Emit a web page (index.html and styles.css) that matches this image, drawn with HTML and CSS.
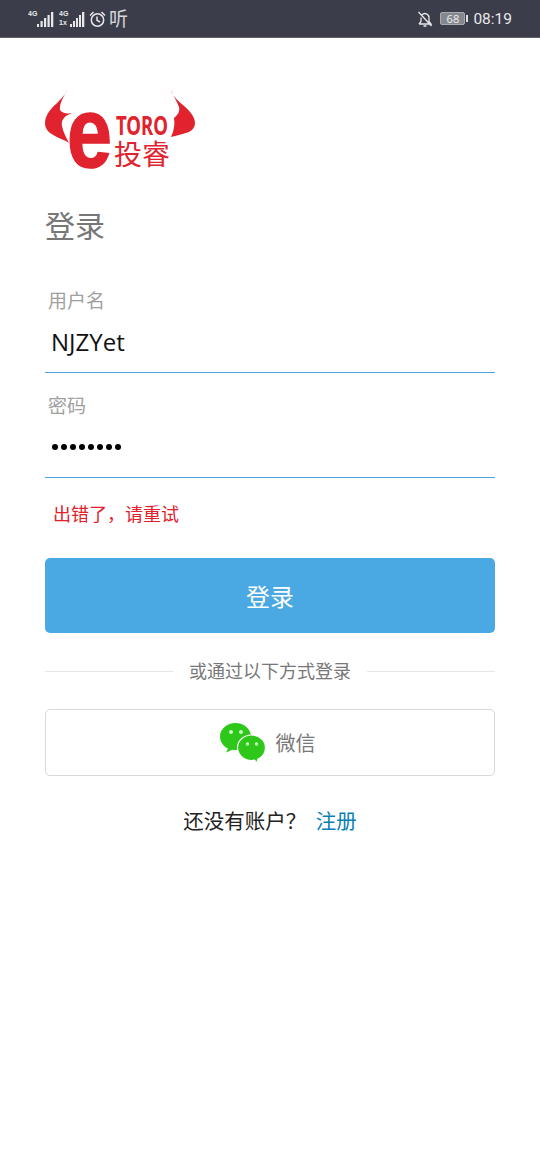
FILE: index.html
```html
<!DOCTYPE html>
<html lang="en">
<head>
  <meta charset="UTF-8">
  <title>登录</title>
  <link rel="stylesheet" href="styles.css">
</head>
<body>

  <!-- Status bar -->
  <div class="status-bar">
    <div class="status-left">
      <svg width="26" height="18" viewBox="0 0 26 18">
        <text x="0" y="6" class="tiny">4G</text>
        <path d="M9 14h2v3H9zM12.500 11h2.200v6h-2.200zM16 8h2.200v9H16zM19.500 5h2.200v12h-2.200zM23 2h2.300v15H23z" fill="#e8e8ea"/>
      </svg>
      <svg width="26" height="18" viewBox="0 0 26 18">
        <text x="0" y="6" class="tiny">4G</text>
        <text x="0" y="15" class="tiny">1x</text>
        <path d="M11 14h2v3h-2zM14 11h2v6h-2zM17 8h2v9h-2zM20 5h2v12h-2zM23 2h2.300v15H23z" fill="#e8e8ea"/>
      </svg>
      <svg width="17" height="18" viewBox="0 0 17 18" fill="none" stroke="#e8e8ea" stroke-width="1.500">
        <circle cx="8.500" cy="10" r="6.200"/>
        <path d="M8 6.500v3.800l3 1.700M1 5.500l3.500-3.500M16 5.500l-3.500-3.500"/>
      </svg>
      <span class="app-name">听</span>
    </div>
    <div class="status-right">
      <svg width="16" height="18" viewBox="0 0 16 18" fill="none" stroke="#e8e8ea" stroke-width="1.300">
        <path d="M2 14h12l-2-2.500V7.500a4 4 0 0 0-7-2.600M4 7.500v4L2 14M6.500 16h3M1.500 2l13 14"/>
      </svg>
      <div class="battery"><span class="battery-level">68</span></div>
      <span class="battery-tip"></span>
      <span class="clock">08:19</span>
    </div>
  </div>

  <!-- Login form -->
  <div class="page">
    <svg class="logo" width="150" height="80" viewBox="0 0 150 80">
      <path d="M22 0C21 4 16 9 11 14C4 20 0 27 0 33C0 39 4 43 10 46C15 49 20 50 24 53C21 47 18 42 17 36C16 30 19 26 27 23C21 24 17 23 15 20C14 13 19 7 22 0Z" fill="#e0232e"/>
      <path d="M126 0C127 5 132 10 138 15C145 21 150 27 150 33C150 37 148 40 144 42C139 44 133 45 126 47C129 41 130 34 129 28C133 25 135 21 134 17C132 11 128 6 126 0Z" fill="#e0232e"/>
      <text x="22" y="77" class="logo-e" textLength="45" lengthAdjust="spacingAndGlyphs">e</text>
      <text x="71" y="45" class="logo-toro" textLength="52" lengthAdjust="spacingAndGlyphs">TORO</text>
      <text x="69" y="75" class="logo-cn">投睿</text>
    </svg>

    <h2 class="title">登录</h2>

    <div class="field field-user">
      <label class="field-label">用户名</label>
      <div class="field-value">NJZYet</div>
    </div>
    <div class="field field-pass">
      <label class="field-label">密码</label>
      <div class="field-dots">
        <i></i><i></i><i></i><i></i><i></i><i></i><i></i><i></i>
      </div>
    </div>

    <div class="error">出错了，请重试</div>

    <button class="button login-button">登录</button>

    <div class="divider"><span>或通过以下方式登录</span></div>

    <button class="button wechat-button">
      <svg width="46" height="41" viewBox="0 0 46 41">
        <path d="M15.500 1C7 1 0 7 0 14.500C0 20 3.500 24.500 8 26.500L6 30.500L12.500 27.800C13.500 28 14.500 28 15.500 28C24 28 31 22 31 14.500C31 7 24 1 15.500 1Z" fill="#2ec81a"/>
        <path d="M31.500 13C23.500 13 17.500 18.800 17.500 25.500C17.500 32.500 23.500 38.500 31.500 38.500C32.500 38.500 33.500 38.400 34.500 38.200L37 41L38 37C42.500 35 45.500 30.500 45.500 25.500C45.500 18.800 39.500 13 31.500 13Z" fill="#2ec81a" stroke="#fff" stroke-width="1.200"/>
        <circle cx="11" cy="10" r="2" fill="#c9f5c0"/>
        <circle cx="21" cy="10" r="2" fill="#c9f5c0"/>
        <circle cx="27.500" cy="22" r="1.700" fill="#c9f5c0"/>
        <circle cx="36.500" cy="22" r="1.700" fill="#c9f5c0"/>
      </svg>
      <span>微信</span>
    </button>

    <div class="register">还没有账户？ <a class="register-link">注册</a></div>
  </div>

</body>
</html>
```

FILE: styles.css
```css
body { margin: 0; background: #fff; font-family: "Open Sans", "Noto Sans CJK SC", sans-serif; }
.status-bar { height: 38px; box-sizing: border-box; background: #3b3e4a; border-bottom: 1px solid #5c6068; display: flex; justify-content: space-between; align-items: center; padding: 0 28px; color: #e8e8ea; }
.status-left { display: flex; align-items: center; gap: 4px; }
.status-left svg:first-child { margin-right: 1px; }
.status-right { display: flex; align-items: center; }
.tiny { font-family: "Liberation Sans", sans-serif; font-size: 7px; font-weight: bold; fill: #e8e8ea; }
.app-name { font-size: 19px; line-height: 18px; margin-left: -1px; color: #d6d6da; }
.battery { width: 25px; height: 13px; box-sizing: border-box; margin-left: 7px; border: 1px solid #a9abb0; border-radius: 2px; background: #85878e; display: flex; justify-content: center; align-items: center; }
.battery-level { font-size: 11px; line-height: 11px; color: #f0f0f0; }
.battery-tip { width: 2px; height: 7px; margin: 0 5px 0 1px; background: #ddd; }
.clock { font-family: Roboto, sans-serif; font-size: 15.5px; }

.page { padding: 52px 45px 0; }
.logo { display: block; }
.logo-e { font-family: "Liberation Sans", sans-serif; font-size: 100px; font-weight: bold; fill: #e0232e; stroke: #e0232e; stroke-width: 1.5px; }
.logo-toro { font-family: "Noto Sans", sans-serif; font-size: 26px; font-weight: bold; fill: #e0232e; }
.logo-cn { font-family: "Noto Sans CJK SC", sans-serif; font-size: 28px; fill: #e0232e; }

.title { margin: 36px 0 0; font-size: 30px; line-height: 40px; font-weight: 400; color: #777; }

.field { box-sizing: border-box; border-bottom: 1px solid #4aa3df; padding: 0 3px; }
.field-user { height: 127px; padding-top: 42px; }
.field-pass { height: 105px; padding-top: 20px; }
.field-label { display: block; font-size: 19px; line-height: 26px; color: #a0a0a0; }
.field-value { font-size: 24px; line-height: 32px; color: #111; padding: 12px 3px 0; }
.field-dots { display: flex; gap: 3px; padding: 25px 4px 0; }
.field-dots i { width: 6px; height: 6px; border-radius: 50%; background: #000; }

.error { margin-top: 22px; padding-left: 8px; font-size: 18px; line-height: 28px; color: #e0202a; }

.button { display: flex; justify-content: center; align-items: center; width: 100%; border-radius: 5px; font-family: inherit; cursor: pointer; }
.login-button { height: 75px; margin-top: 30px; border: none; background: #4aa8e2; color: #fff; font-size: 24px; }

.divider { display: flex; align-items: center; gap: 16px; margin-top: 26px; font-size: 18px; line-height: 24px; color: #777; }
.divider::before, .divider::after { content: ""; flex: 1; height: 1px; background: #e6e6e6; }

.wechat-button { height: 67px; margin-top: 26px; padding: 0 5px 0 0; gap: 10px; background: #fff; border: 1px solid #d8d8d8; font-size: 20px; color: #777; }

.register { margin-top: 30px; text-align: center; font-size: 20.5px; line-height: 30px; color: #222; }
.register-link { color: #0a7fb5; margin-left: 4px; }
```
